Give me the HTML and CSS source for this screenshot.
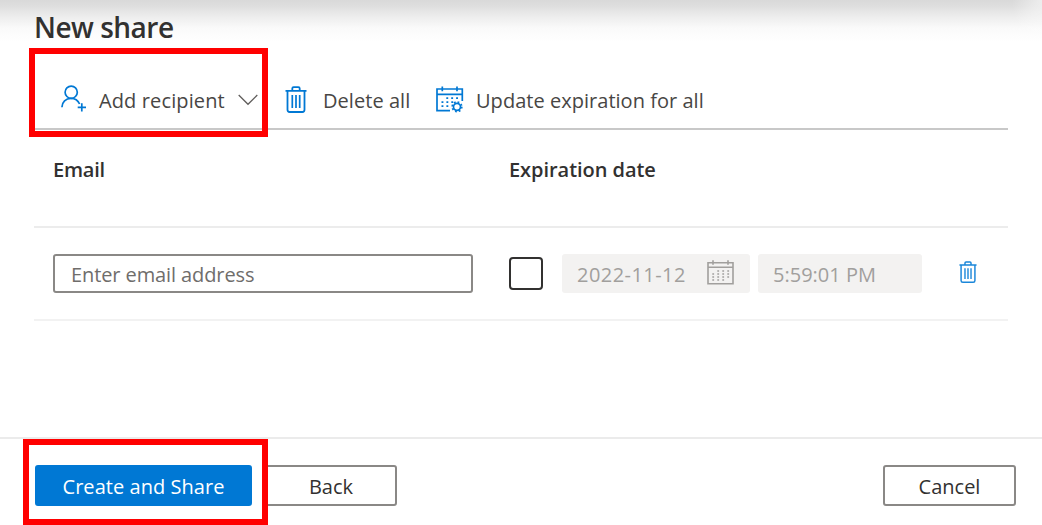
FILE: index.html
```html
<!DOCTYPE html>
<html lang="en">
<head>
<meta charset="utf-8">
<title>New share</title>
<link rel="stylesheet" href="styles.css">
</head>
<body>
<svg class="defs" aria-hidden="true">
  <symbol id="trash" viewBox="0 0 22 27">
    <g fill="none" stroke="currentColor" stroke-width="1.8">
      <path d="M.5 4.8H21.5M7.3 4.5V2.4Q7.3 1.1 8.6 1.1H13.4Q14.7 1.1 14.7 2.4V4.5M2.5 5V23.8Q2.5 26 4.6 26H17.4Q19.5 26 19.5 23.8V5"/>
      <path d="M7.3 9V22M11 9V22M14.7 9V22" stroke-width="1.7"/>
    </g>
  </symbol>
</svg>
<main class="panel">
  <h1 class="title"><span class="t-title">New share</span></h1>
  <nav class="toolbar">
    <button class="command">
      <svg class="icon-person" viewBox="0 0 26 28" fill="none" stroke="currentColor" stroke-width="1.7"><circle cx="10.2" cy="7.2" r="6.1"/><path d="M.9 22.2C1 17 4.8 13.3 10 13.3C14 13.3 17 15.3 18.6 19"/><path d="M20.8 18.3V26.5M16.7 22.4H25"/></svg>
      <span class="t-add">Add recipient</span>
      <svg class="icon-chevron" viewBox="0 0 20 12" fill="none" stroke="currentColor" stroke-width="1.3"><path d="M.7 1L10 10.3L19.3 1"/></svg>
    </button>
    <button class="command">
      <svg class="icon-trash"><use href="#trash"/></svg>
      <span class="t-delete">Delete all</span>
    </button>
    <button class="command">
      <svg class="icon-update" viewBox="0 0 28 27" fill="none" stroke="currentColor" stroke-width="1.7"><path d="M14 24.7H1V3H26.3V15M1 8.3H26.3M6.3.5V5.3M21 .5V5.3"/><path d="M10.3 12.2H22.5M5.5 16.2H17.5M5.5 20.2H13" stroke-width="1.8" stroke-dasharray="1.9 3"/><circle cx="21" cy="20.8" r="3.5"/><circle cx="21" cy="20.8" r="4.8" stroke-width="1.7" stroke-dasharray="1.8 1.97"/></svg>
      <span class="t-update">Update expiration for all</span>
    </button>
  </nav>
  <div class="row head">
    <div class="col-email t-email">Email</div>
    <div class="t-exp">Expiration date</div>
  </div>
  <div class="row entry">
    <div class="col-email"><div class="field"><span class="t-placeholder">Enter email address</span></div></div>
    <div class="checkbox"></div>
    <div class="date"><span class="t-date">2022-11-12</span>
      <svg class="icon-calendar" viewBox="0 0 27 25" fill="none" stroke="currentColor" stroke-width="1.6"><path d="M1 2.8H26V23.8H1ZM1 7.3H26M6 .2V4.8M21 .2V4.8"/><path d="M10.3 11H22.5M5.3 14H22.5M5.3 17H22.5M5.3 20H17.5" stroke-width="1.6" stroke-dasharray="1.8 3.2"/></svg>
    </div>
    <div class="time"><span class="t-time">5:59:01 PM</span></div>
    <svg class="icon-trash small"><use href="#trash"/></svg>
  </div>
</main>
<footer class="footer">
  <button class="btn primary"><span class="t-create">Create and Share</span></button>
  <button class="btn back">Back</button>
  <button class="btn cancel">Cancel</button>
</footer>
<div class="highlight top"></div>
<div class="highlight bottom"></div>
</body>
</html>
```
FILE: styles.css
```css
* { box-sizing: border-box; }
body {
  margin: 0;
  position: relative;
  width: 1042px;
  height: 525px;
  overflow: hidden;
  display: flex;
  flex-direction: column;
  background: radial-gradient(ellipse 30px 44px at 100% 0, #fff8, #fff0), linear-gradient(#d9d9d9 0, #dedede 6px, #ececec 16px, #fafafa 28px, #fff 42px);
  font-family: "Open Sans", "Noto Sans", sans-serif;
  font-size: 20px;
  line-height: 28px;
  color: #323130;
  white-space: nowrap;
}
button { font: inherit; color: inherit; padding: 0; border: 0; background: none; }
.defs { position: absolute; width: 0; height: 0; }
.panel { height: 437px; padding: 0 34px; }
.title { margin: 0; height: 72px; padding-top: 8px; font-size: 28px; line-height: 38px; font-weight: 600; }
.toolbar { height: 58px; display: flex; align-items: flex-start; padding: 13px 0 0 27px; border-bottom: 2px solid #c8c8c8; color: #484644; }
.command { display: flex; align-items: flex-start; height: 32px; line-height: 32px; }
.command:nth-child(1) { width: 224px; padding-right: 27px; }
.command:nth-child(2) { width: 150px; }
.command svg { color: #0078d4; flex: none; }
.icon-person { width: 26px; height: 28px; margin: 0 12px 0 0; }
.command .icon-chevron { width: 20px; height: 12px; margin: 9px 0 0 auto; color: #605e5c; }
.icon-trash { width: 22px; height: 27px; margin: 1px 16px 0 0; color: #0078d4; }
.icon-update { width: 28px; height: 27px; margin: 1px 12px 0 1px; }
.row { display: flex; border-bottom: 2px solid #ececec; padding-left: 19px; }
.head { height: 98px; padding-top: 26px; font-weight: 600; }
.entry { height: 93px; align-items: center; border-color: #f2f2f2; }
.col-email { width: 456px; }
.field { width: 420px; height: 39px; margin-bottom: 1px; border: 2px solid #8a8886; border-radius: 3px; padding-left: 16px; line-height: 37px; color: #6f6d6b; }
.checkbox { width: 34px; height: 33px; border: 2px solid #323130; border-radius: 4px; }
.date, .time { height: 39px; margin: 0 0 1px 19px; background: #f3f2f1; border-radius: 3px; color: #a19f9d; line-height: 41px; }
.date { width: 188px; padding: 0 16px 0 15px; display: flex; justify-content: space-between; }
.time { width: 164px; margin-left: 8px; padding-left: 15px; }
.icon-calendar { width: 27px; height: 25px; margin-top: 6px; }
.small { width: 18px; height: 22px; margin: 0 0 3px 37px; color: #1a86d9; }
.footer { height: 88px; border-top: 2px solid #ebebeb; padding: 26px 26px 0 35px; display: flex; background: #fff; }
.btn { height: 41px; line-height: 40px; border: 2px solid #8a8886; border-radius: 3px; font-weight: 500; }
.primary { width: 217px; background: #0078d4; border-color: #0078d4; color: #fff; }
.back { width: 132px; margin-left: 13px; }
.cancel { width: 133px; margin-left: auto; }
.highlight { position: absolute; border: 6px solid red; }
.top { left: 29px; top: 48px; width: 239px; height: 89px; }
.bottom { left: 23px; top: 439px; width: 245px; height: 86px; }
.t-title { letter-spacing: -0.5px; }
.t-add { letter-spacing: 0.12px; }
.t-delete { letter-spacing: 0.05px; }
.t-update { letter-spacing: 0.03px; }
.t-placeholder { letter-spacing: -0.1px; }
.t-email { letter-spacing: -0.2px; }
.t-exp { letter-spacing: -0.05px; }
.t-date { letter-spacing: 0.45px; }
.t-create { letter-spacing: 0.05px; }
```
